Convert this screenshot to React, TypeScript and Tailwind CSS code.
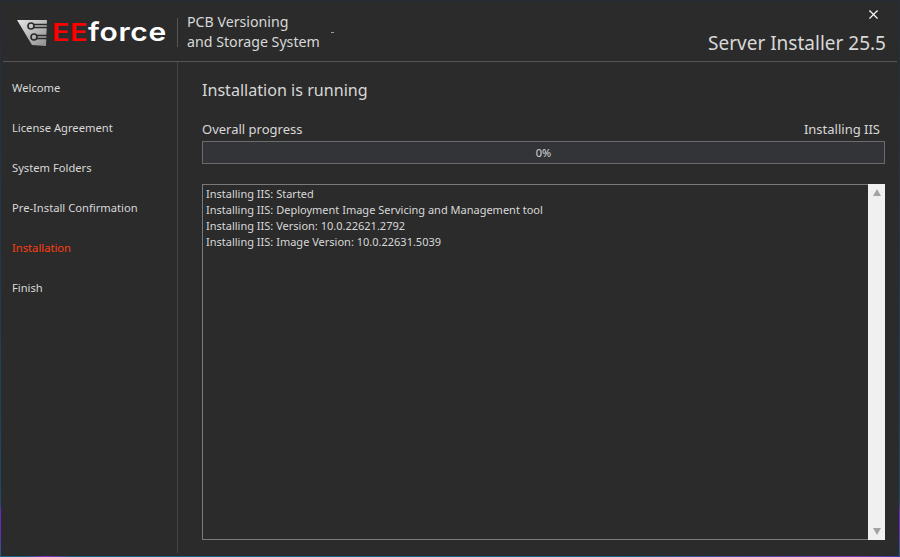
import { X } from 'lucide-react'

const steps = ['Welcome', 'License Agreement', 'System Folders', 'Pre-Install Confirmation', 'Installation', 'Finish']

const logLines = [
  'Installing IIS: Started',
  'Installing IIS: Deployment Image Servicing and Management tool',
  'Installing IIS: Version: 10.0.22621.2792',
  'Installing IIS: Image Version: 10.0.22631.5039',
]

function LogoMark() {
  return (
    <svg width="31" height="28" viewBox="0 0 31 28" className="shrink-0">
      <defs>
        <linearGradient id="mark" x1="0" y1="0" x2="1" y2="1">
          <stop offset="0" stopColor="#e6e6e6" />
          <stop offset="1" stopColor="#8f8f8f" />
        </linearGradient>
      </defs>
      <path d="M0 1H30L29 27L15 26Z" fill="url(#mark)" />
      <g fill="none" stroke="#2b2b2b" strokeWidth="1.6">
        <circle cx="14" cy="7" r="3" />
        <circle cx="17" cy="18" r="3" />
        <path d="M17 5.5H30M17 8.5H30M20 16.5H30M20 19.5H30" />
      </g>
    </svg>
  )
}

export default function App() {
  return (
    <div className="w-[900px] h-[557px] flex flex-col overflow-hidden bg-[linear-gradient(180deg,#262c38_0%,#1f3a4f_50%,#1d4a66_90%,#6a2bc0_92%,#6a2bc0_95%,#1d5f86_100%)] font-['Noto_Sans','Open_Sans',sans-serif]">
      <div className="flex-1 min-h-0 mx-px mt-px flex flex-col bg-[#2b2b2b] text-[#e0e0e0]">
        {/* Header */}
        <header className="h-[61px] shrink-0 mx-0.5 border-b border-[#555555] flex items-start">
          <div className="flex items-center pl-[14px] pt-[16px]">
            <LogoMark />
            <div className="ml-[4px] w-[116px] font-['Inter',sans-serif] font-semibold text-[24px] leading-[30px] tracking-[0.5px] whitespace-nowrap origin-left scale-x-[1.2]">
              <span className="text-[#ff0000] font-semibold">EE</span>
              <span className="text-white text-[25px]">force</span>
            </div>
          </div>
          <div className="ml-[9px] mt-[17px] h-[29px] w-px bg-[#555555]" />
          <div className="ml-[9px] mt-[11px] text-[14.2px] leading-[20px] text-[#d8d8d8]">
            <div>PCB Versioning</div>
            <div>and Storage System</div>
          </div>
          <div className="ml-[11px] mt-[31px] h-px w-[3px] bg-[#999999]" />
          <div className="ml-auto mr-[11px] flex flex-col items-end">
            <X size={15} strokeWidth={1.8} className="mt-[6px] mr-[5px] text-white" />
            <div className="mt-[9px] text-[19px] leading-[24px] text-[#d8d8d8]">Server Installer 25.5</div>
          </div>
        </header>

        <div className="flex-1 min-h-0 flex">
          {/* Sidebar */}
          <nav className="w-[177px] shrink-0 mb-[3px] border-r border-[#444444] pl-[11px] pt-[6px]">
            {steps.map((step) => (
              <div
                key={step}
                className={`h-[40px] flex items-center text-[11.2px] ${step === 'Installation' ? 'text-[#ff3d12]' : 'text-[#d8d8d8]'}`}
              >
                {step}
              </div>
            ))}
          </nav>

          {/* Content */}
          <main className="flex-1 min-w-0 flex flex-col pl-[24px] pr-[14px] pb-[16px]">
            <h1 className="mt-[16px] text-[16.1px] leading-[24px] text-[#d8d8d8]">Installation is running</h1>
            <div className="mt-[17px] flex justify-between text-[13px] leading-[20px] text-[#d8d8d8]">
              <span>Overall progress</span>
              <span className="mr-[5px]">Installing IIS</span>
            </div>
            <div className="mt-[2px] h-[23px] shrink-0 border border-[#6b6b6b] bg-[#333437] pt-px flex items-center justify-center text-[11px] text-[#d8d8d8]">
              0%
            </div>
            <div className="mt-[20px] flex-1 min-h-0 flex border border-[#7a7a7a]">
              <div className="flex-1 min-w-0 px-[3px] pt-px text-[11px] leading-[16px] text-[#d8d8d8]">
                {logLines.map((line) => (
                  <div key={line}>{line}</div>
                ))}
              </div>
              <div className="w-[17px] shrink-0 -my-px -mr-px bg-[#f0f0f0] flex flex-col items-center justify-between py-[5px]">
                <span className="w-0 h-0 border-x-[4px] border-x-transparent border-b-[7px] border-b-[#a3a3a3]" />
                <span className="w-0 h-0 border-x-[4px] border-x-transparent border-t-[7px] border-t-[#a3a3a3]" />
              </div>
            </div>
          </main>
        </div>
      </div>
      <div className="h-px shrink-0 bg-[linear-gradient(90deg,#1d5f86_0%,#1d5f86_3%,#8a2fc0_5%,#1d5f86_8%,#1d5f86_70%,#7a3ab0_95%,#3a3fa0_100%)]" />
    </div>
  )
}
